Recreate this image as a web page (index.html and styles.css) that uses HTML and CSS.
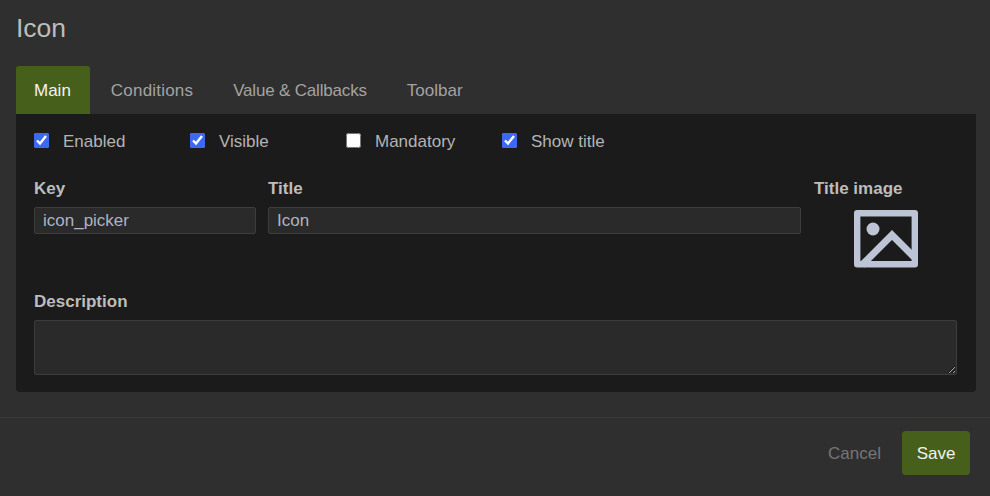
FILE: index.html
```html
<!DOCTYPE html>
<html lang="en">
<head>
    <meta charset="UTF-8">
    <meta name="viewport" content="width=device-width, initial-scale=1.0">
    <title>Icon</title>
    <link rel="stylesheet" href="styles.css">
</head>
<body>
    <div class="dialog">
        <h1 class="dialog-title">Icon</h1>
        <div class="tabs">
            <a class="tab active">Main</a>
            <a class="tab tab-wide">Conditions</a>
            <a class="tab tab-narrow">Value &amp; Callbacks</a>
            <a class="tab">Toolbar</a>
        </div>
        <div class="panel">
            <div class="checks">
                <label class="check"><input type="checkbox" checked><span>Enabled</span></label>
                <label class="check"><input type="checkbox" checked><span>Visible</span></label>
                <label class="check"><input type="checkbox"><span>Mandatory</span></label>
                <label class="check"><input type="checkbox" checked><span>Show title</span></label>
            </div>
            <div class="fields">
                <div class="field">
                    <label class="field-label">Key</label>
                    <input class="text-input" type="text" value="icon_picker">
                </div>
                <div class="field">
                    <label class="field-label">Title</label>
                    <input class="text-input" type="text" value="Icon">
                </div>
                <div class="field field-image">
                    <label class="field-label">Title image</label>
                    <div class="image-pick">
                        <svg width="64" height="58" viewBox="0 0 64 58">
                            <rect x="3.2" y="3.3" width="57.6" height="51" fill="none" stroke="#bcc4d6" stroke-width="6.4" stroke-linejoin="round"/>
                            <circle cx="19" cy="19" r="6.5" fill="#bcc4d6"/>
                            <path d="M8 55 L38 25 L60 47" fill="none" stroke="#bcc4d6" stroke-width="7"/>
                        </svg>
                    </div>
                </div>
            </div>
            <div class="field">
                <label class="field-label">Description</label>
                <textarea class="text-area"></textarea>
            </div>
        </div>
        <div class="footer">
            <button class="btn-cancel">Cancel</button>
            <button class="btn-save">Save</button>
        </div>
    </div>
</body>
</html>
```

FILE: styles.css
```css
html, body {
    height: 100%;
}
body {
    margin: 0;
    background-color: #2f2f2f;
    color: #bdbdbd;
    font-family: "Liberation Sans", Arial, sans-serif;
    font-size: 17px;
    overflow: hidden;
}
.dialog-title {
    margin: 0;
    padding: 13px 16px 0;
    height: 53px;
    box-sizing: border-box;
    font-size: 26.5px;
    line-height: 30px;
    font-weight: normal;
    color: #bdbdbd;
}
.tabs {
    display: flex;
    margin: 13px 16px 0;
    height: 48px;
}
.tab {
    padding: 1px 20px 0;
    line-height: 48px;
    border-radius: 3px 3px 0 0;
    color: #a3a3a3;
}
.tab-wide {
    margin-left: 1px;
    letter-spacing: 0.2px;
}
.tab-narrow {
    letter-spacing: -0.18px;
}
.tab.active {
    padding: 1px 19px 0 18px;
    background-color: #46601c;
    color: #f2f2f2;
}
.panel {
    margin: 0 14px 0 16px;
    padding: 17px 19px 17px 18px;
    height: 278px;
    box-sizing: border-box;
    background-color: #1b1b1b;
    border-radius: 0 0 4px 4px;
}
.checks {
    display: flex;
    height: 20px;
}
.check {
    display: flex;
    align-items: center;
    gap: 14px;
    width: 156px;
    color: #b4b4b4;
}
.check span {
    padding-top: 1px;
}
.check input {
    width: 15px;
    height: 15px;
    margin: 0 0 1px;
    accent-color: #3b69f2;
}
.fields {
    display: grid;
    grid-template-columns: 222px 533px 143px;
    column-gap: 12px;
    margin-top: 28px;
    height: 113px;
}
.field-image {
    margin-left: 1px;
}
.field-label {
    display: block;
    font-weight: bold;
    color: #bdbdbd;
    line-height: 20px;
    margin-bottom: 8px;
}
.text-input, .text-area {
    display: block;
    width: 100%;
    box-sizing: border-box;
    background-color: #2a2a2a;
    border: 1px solid #3d3d3d;
    border-radius: 2px;
    color: #aeb4c2;
    font-family: inherit;
    font-size: 17px;
    outline: none;
}
.text-input {
    height: 27px;
    padding: 0 8px;
}
.text-area {
    height: 55px;
    padding: 8px;
    margin: 0;
}
.image-pick {
    display: flex;
    justify-content: center;
    margin: 11px 0 0 1px;
}
.footer {
    display: flex;
    justify-content: flex-end;
    align-items: center;
    gap: 21px;
    margin-top: 25px;
    padding: 13px 20px 0;
    border-top: 1px solid #3a3a3a;
}
.footer button {
    font-family: inherit;
    font-size: 17px;
    border: none;
    cursor: pointer;
    padding: 1px 0 0;
}
.btn-cancel {
    background: none;
    color: #767676;
}
.btn-save {
    width: 68px;
    height: 44px;
    background-color: #46601c;
    color: #f2f2f2;
    border-radius: 4px;
}
```
